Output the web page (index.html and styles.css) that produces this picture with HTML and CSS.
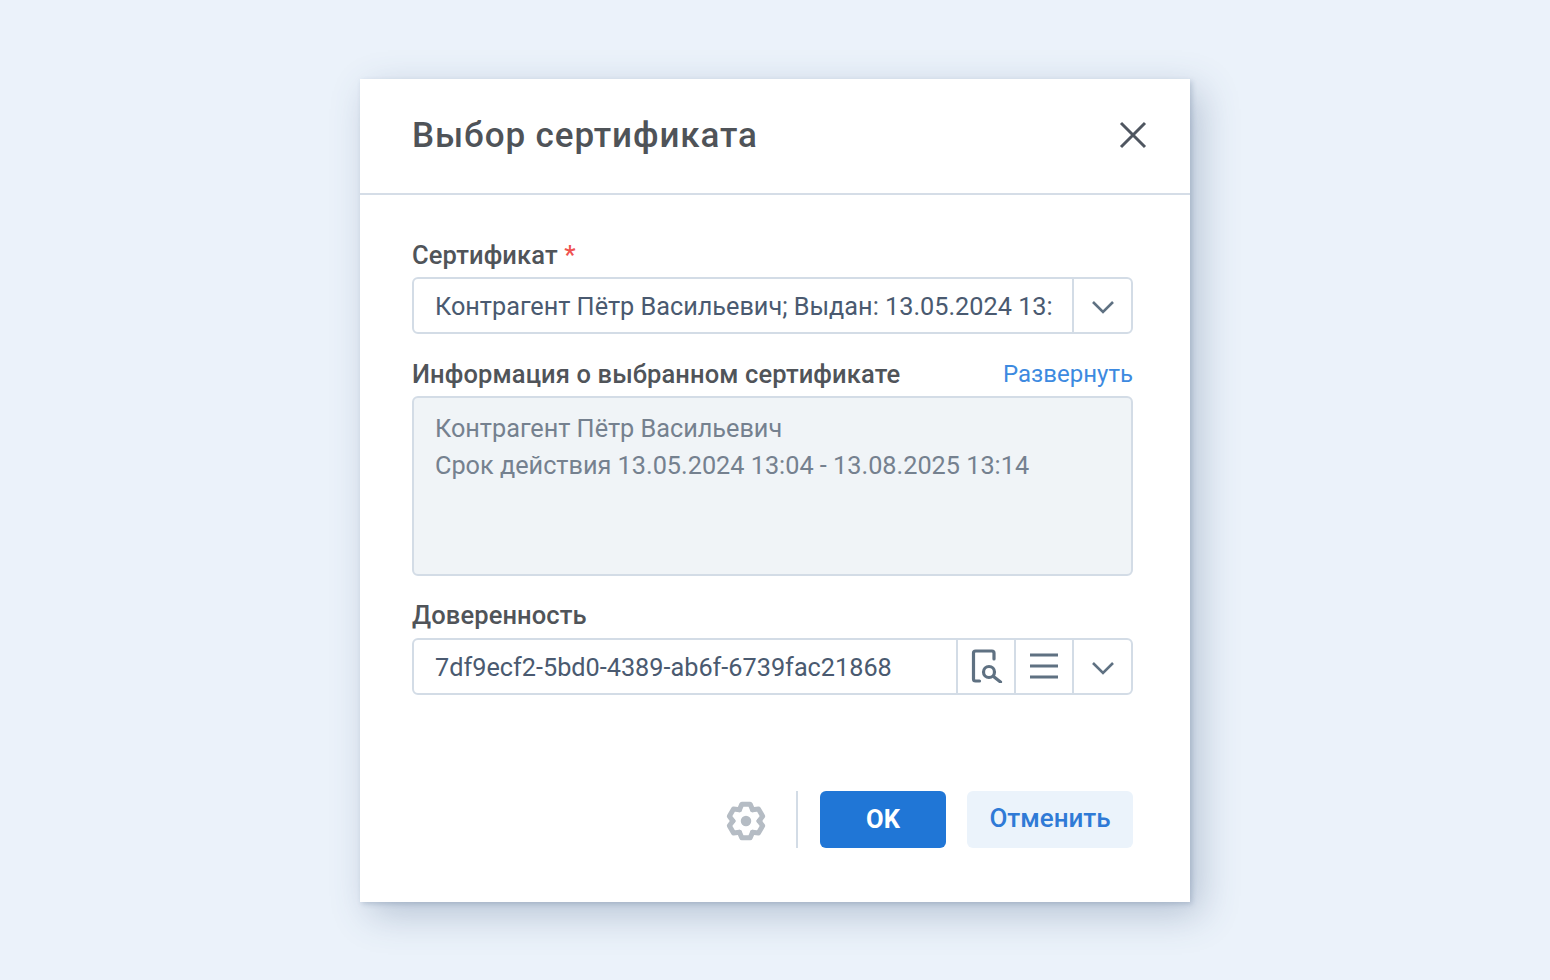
FILE: index.html
```html
<!DOCTYPE html>
<html lang="ru">
<head>
<meta charset="utf-8">
<title>Выбор сертификата</title>
<link rel="stylesheet" href="styles.css">
</head>
<body>
<div class="dialog">
  <header class="head">
    <h1 class="title">Выбор сертификата</h1>
    <svg class="close" width="30" height="30" viewBox="0 0 30 30"><path d="M3 3L27 27M27 3L3 27" fill="none" stroke="#4f5660" stroke-width="3"/></svg>
  </header>
  <main class="body">
    <div class="label-row label-first"><span class="label">Сертификат <span class="req">*</span></span></div>
    <div class="field">
      <div class="value">Контрагент Пётр Васильевич; Выдан: 13.05.2024 13:</div>
      <div class="cell"><svg class="chev" width="24" height="14" viewBox="0 0 24 14"><path d="M2 2L12 12L22 2" fill="none" stroke="#5f7182" stroke-width="2.6"/></svg></div>
    </div>
    <div class="label-row label-second"><span class="label">Информация о выбранном сертификате</span><a class="link">Развернуть</a></div>
    <div class="info">Контрагент Пётр Васильевич<br>Срок действия 13.05.2024 13:04 - 13.08.2025 13:14</div>
    <div class="label-row label-third"><span class="label">Доверенность</span></div>
    <div class="field">
      <div class="value">7df9ecf2-5bd0-4389-ab6f-6739fac21868</div>
      <div class="cell"><svg class="doc" width="32" height="34" viewBox="0 0 32 34"><path d="M8.500 32H4.500Q2.500 32 2.500 30V4Q2.500 2 4.500 2H21Q23 2 23 4V10" fill="none" stroke="#5f7182" stroke-width="3.200" stroke-linecap="round"/><circle cx="18" cy="23" r="5.500" fill="none" stroke="#5f7182" stroke-width="3.200"/><path d="M22.500 27.500L29.500 33" fill="none" stroke="#5f7182" stroke-width="3.200" stroke-linecap="round"/></svg></div>
      <div class="cell"><svg width="30" height="26" viewBox="0 0 30 26"><path d="M1 2H29M1 13H29M1 24H29" fill="none" stroke="#5f7182" stroke-width="3.200"/></svg></div>
      <div class="cell"><svg class="chev" width="24" height="14" viewBox="0 0 24 14"><path d="M2 2L12 12L22 2" fill="none" stroke="#5f7182" stroke-width="2.600"/></svg></div>
    </div>
  </main>
  <footer class="foot">
    <svg class="gear" width="42" height="42" viewBox="0 0 40 40">
      <g fill="none" stroke="#b5bcc4" stroke-width="4.800" stroke-linejoin="round" stroke-linecap="round">
        <path d="M13.750 9.200L16 4H24L26.250 9.200"/>
        <path d="M13.750 9.200L16 4H24L26.250 9.200" transform="rotate(60 20 20)"/>
        <path d="M13.750 9.200L16 4H24L26.250 9.200" transform="rotate(120 20 20)"/>
        <path d="M13.750 9.200L16 4H24L26.250 9.200" transform="rotate(180 20 20)"/>
        <path d="M13.750 9.200L16 4H24L26.250 9.200" transform="rotate(240 20 20)"/>
        <path d="M13.750 9.200L16 4H24L26.250 9.200" transform="rotate(300 20 20)"/>
      </g>
      <circle cx="20" cy="20" r="5" fill="#b5bcc4"/>
    </svg>
    <div class="sep"></div>
    <button class="btn ok">OK</button>
    <button class="btn cancel">Отменить</button>
  </footer>
</div>
</body>
</html>
```
FILE: styles.css
```css
* { box-sizing: border-box; }
html, body { height: 100%; }
body {
  margin: 0;
  background: #ebf2fa;
  font-family: Roboto, "Noto Sans", sans-serif;
  display: flex;
  align-items: center;
  justify-content: center;
  height: 980px;
  overflow: hidden;
}
.dialog {
  width: 830px;
  height: 823px;
  background: #fff;
  box-shadow: 10px 12px 36px rgba(60, 85, 125, 0.3), 2px 2px 5px rgba(60, 85, 125, 0.22);
  display: flex;
  flex-direction: column;
}
.head {
  height: 116px;
  flex: none;
  border-bottom: 2px solid #d5dde7;
  padding: 0 42px 4px 52px;
  display: flex;
  align-items: center;
  justify-content: space-between;
}
.title {
  margin: 4px 0 0;
  font-size: 35px;
  font-weight: 500;
  letter-spacing: 0.9px;
  color: #4f5358;
}
.close { margin-top: 2px; }
.body {
  flex: 1;
  padding: 0 57px 0 52px;
}
.label-row {
  display: flex;
  justify-content: space-between;
  align-items: center;
  height: 30px;
  margin-bottom: 7px;
}
.label-first { margin-top: 45px; }
.label-second { margin-top: 25px; }
.label-third { margin-top: 24px; margin-bottom: 8px; }
.label {
  font-size: 25.500px;
  font-weight: 500;
  letter-spacing: 0.12px;
  color: #505459;
}
.req { color: #ef5350; }
.link { font-size: 24px; color: #3d8ae0; }
.field {
  height: 57px;
  border: 2px solid #d3dce6;
  border-radius: 6px;
  display: flex;
  background: #fff;
}
.value {
  flex: 1;
  min-width: 0;
  padding: 0 0 0 21px;
  font-size: 25.250px;
  line-height: 55px;
  color: #4a5a70;
  white-space: nowrap;
}
.cell {
  flex: none;
  width: 58px;
  border-left: 2px solid #d3dce6;
  display: flex;
  align-items: center;
  justify-content: center;
}
.cell:last-child { width: 59px; }
.chev { margin-top: 4px; }
.doc { margin-left: 2px; }
.info {
  height: 180px;
  border: 2px solid #d3dce6;
  border-radius: 6px;
  background: #f0f4f7;
  padding: 12px 21px;
  font-size: 25.250px;
  line-height: 37px;
  color: #75818f;
}
.foot {
  flex: none;
  height: 111px;
  padding: 0 57px 54px 52px;
  display: flex;
  align-items: stretch;
  justify-content: flex-end;
}
.gear { align-self: center; margin: 4px 29px 0 0; }
.sep { width: 2px; background: #d3dce6; margin-right: 22px; }
.btn {
  border: 0;
  border-radius: 6px;
  font-family: inherit;
  font-weight: 500;
  font-size: 26px;
  padding: 0;
}
.ok { width: 126px; background: #2076d6; color: #fff; font-weight: 700; font-size: 25.500px; margin-right: 21px; }
.cancel { width: 166px; padding-bottom: 3px; background: #ebf3fb; color: #2f7ad6; }
```
